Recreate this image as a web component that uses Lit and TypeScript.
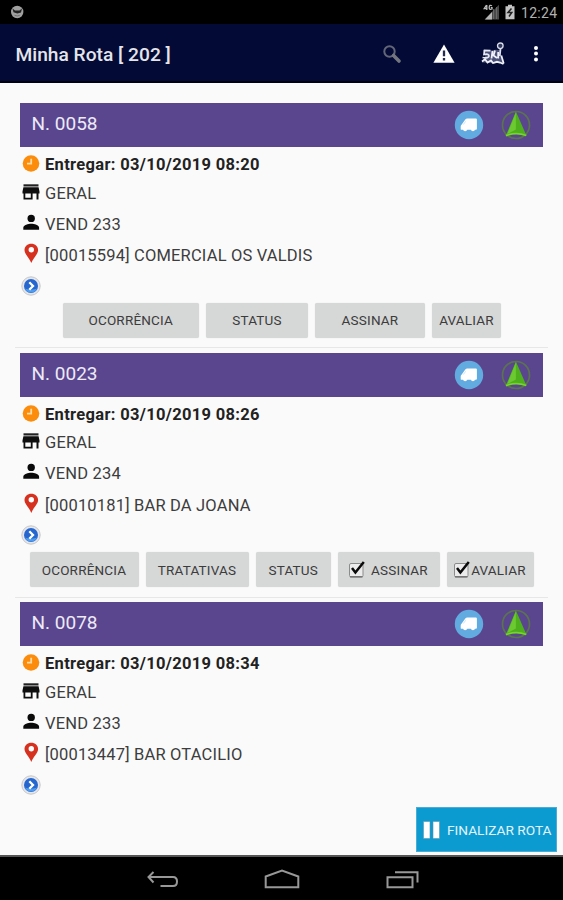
import { LitElement, html, css, svg, nothing } from "lit";
import { customElement, property } from "lit/decorators.js";
import { styleMap } from "lit/directives/style-map.js";

interface Action {
  label: string;
  width: number;
  checked?: boolean;
  gap?: number;
}

interface Delivery {
  number: string;
  due: string;
  seller: string;
  customer: string;
  indent: number;
  actions: Action[];
}

const deliveries: Delivery[] = [
  {
    number: "0058",
    due: "03/10/2019 08:20",
    seller: "VEND 233",
    customer: "[00015594] COMERCIAL OS VALDIS",
    indent: 42.5,
    actions: [
      { label: "OCORRÊNCIA", width: 136.5 },
      { label: "STATUS", width: 102 },
      { label: "ASSINAR", width: 110 },
      { label: "AVALIAR", width: 69 },
    ],
  },
  {
    number: "0023",
    due: "03/10/2019 08:26",
    seller: "VEND 234",
    customer: "[00010181] BAR DA JOANA",
    indent: 9.5,
    actions: [
      { label: "OCORRÊNCIA", width: 109 },
      { label: "TRATATIVAS", width: 103 },
      { label: "STATUS", width: 75.5 },
      { label: "ASSINAR", width: 102, checked: true, gap: 5 },
      { label: "AVALIAR", width: 87, checked: true, gap: 0 },
    ],
  },
  {
    number: "0078",
    due: "03/10/2019 08:34",
    seller: "VEND 233",
    customer: "[00013447] BAR OTACILIO",
    indent: 0,
    actions: [],
  },
];

const clockIcon = html`<svg width="18" height="18" viewBox="0 0 18 18">
  <circle cx="9" cy="9.500" r="8.300" fill="#fb8c0c" />
  <path d="M9.200 4.700V9.700H5" fill="none" stroke="#ffdca6" stroke-width="1.800" />
</svg>`;

const storeIcon = html`<svg width="18" height="18" viewBox="0 0 18 18">
  <path d="M1.500 1.300h15v2.200h-15z" fill="#222" />
  <path d="M1.400 4.300h15.200l.9 4.200v1.900h-1V16.500h-2v-6.100h-3.900v6.100H1.500v-6.100H.5V8.500zM3.300 10.400v4.300h5.500v-4.300z" fill="#0e0e0e" fill-rule="evenodd" />
</svg>`;

const personIcon = html`<svg width="18" height="18" viewBox="0 0 18 18">
  <circle cx="9.200" cy="4.400" r="3.700" fill="#0a0a0a" />
  <path d="M1.300 15.700v-2c0-2.700 5-3.900 7.900-3.900s7.900 1.200 7.900 3.900v2z" fill="#0a0a0a" />
</svg>`;

const pinIcon = html`<svg width="18" height="22" viewBox="0 0 18 22">
  <path d="M9.300.8C5.500.8 2.500 3.500 2.500 7.100c0 4.200 4.800 7.500 6.800 12.900 2-5.400 6.800-8.700 6.800-12.900C16.100 3.500 13.100.8 9.300.8z" fill="#d6301f" />
  <circle cx="9.300" cy="6.800" r="2.700" fill="#fff" />
</svg>`;

const goIcon = html`<svg width="22" height="22" viewBox="0 0 22 22">
  <circle cx="11" cy="11" r="9.200" fill="#e6e6e8" stroke="#c6c8cc" stroke-width="1" />
  <circle cx="11" cy="11" r="7" fill="#2566cf" />
  <path d="M5 13.500a6.500 6.500 0 0 0 12 0c-3 1.500-9 1.500-12 0z" fill="#4c9cf2" />
  <path d="M9.300 7.300 13 11l-3.700 3.700" fill="none" stroke="#fff" stroke-width="2.300" />
</svg>`;

const vanIcon = html`<svg width="30" height="30" viewBox="0 0 30 30">
  <circle cx="15" cy="15" r="14.200" fill="#62abe0" />
  <path d="M13.300 8.500h8.600q1 0 1 1v9.300q0 1-1 1h-.8a2.300 2.300 0 0 1-4.300 0h-3.500a2.300 2.300 0 0 1-4.300 0H7.600q-.9 0-.9-.9v-2.400q0-1 .8-1.700l3.800-5.300q.8-1 2-1z" fill="#fff" />
  <path d="M11.700 11.300 9.400 14.500" stroke="#cfe5f6" stroke-width="1" />
</svg>`;

const compassIcon = html`<svg width="32" height="32" viewBox="0 0 32 32">
  <circle cx="16" cy="16" r="13.500" fill="none" stroke="#5c7350" stroke-width="1.700" />
  <path d="M15.900 2.600 26.300 26.300Q16 23.300 5.900 26.500z" fill="#4fb01e" />
  <path d="M15.900 3.500V20.500L7.300 25z" fill="#6cc930" />
  <path d="M5.900 26.700Q16 22.500 26.300 26.500" fill="none" stroke="#74d628" stroke-width="1.800" />
</svg>`;

const checkIcon = html`<svg class="check" width="18" height="18" viewBox="0 0 18 18">
  <rect x="1.500" y="2.500" width="13.500" height="13.500" rx="1.500" fill="#ececec" stroke="#8b8b8b" />
  <path d="M2 15.800h12.500" stroke="#666" stroke-width="1.200" />
  <path d="M4 7 7.400 11.500 15.800 1" fill="none" stroke="#0a0a0a" stroke-width="2.500" />
</svg>`;

@customElement("status-bar")
class StatusBar extends LitElement {
  static styles = css`
    :host {
      display: flex;
      align-items: center;
      height: 24px;
      box-sizing: border-box;
      padding: 0 5px 0 10px;
      background: #000;
      color: #b2b2b2;
      font: 14px Roboto, sans-serif;
    }
    svg { display: block; flex: none; }
    .spacer { flex: 1; }
    .battery { margin-left: 5px; }
    .time { margin: 2px 0 0 6px; width: 37px; letter-spacing: 0.3px; white-space: nowrap; }
  `;
  render() {
    return html`
      <svg width="14" height="14" viewBox="0 0 14 14">
        <circle cx="7.200" cy="7" r="6.200" fill="#a0a0a0" />
        <path d="M2.500 3.500 5 5.400h4.500L12 3.500 11 7.500 7.300 8.500 3.500 7.300z" fill="#222" />
        <path d="M4.500 10.300q2.800 1.300 5.300 0" fill="none" stroke="#666" stroke-width=".8" />
      </svg>
      <span class="spacer"></span>
      <svg width="17" height="16" viewBox="0 0 17 16">
        <path d="M16 .8V15.500H1.500z" fill="#494949" />
        <path d="M9 8v7.500H2z" fill="#b5b5b5" />
        <path d="M3.500 1 1.200 4.500h3.300M3.800 1v5M9 1.800Q6.300.3 6.200 3.300T9 5V3.600H7.800" fill="none" stroke="#bdbdbd" stroke-width="1.300" />
        <path d="M10.500 5v10M13.500 3v12" stroke="#777" stroke-width=".7" />
      </svg>
      <svg class="battery" width="10" height="16" viewBox="0 0 10 16">
        <path d="M3 .8h4v1.400h2.500V15.200H.5V2.200H3z" fill="#c4c4c4" />
        <path d="M6.500 4.500 3 8.500h3.800L4 12.500" fill="none" stroke="#222" stroke-width="1.500" />
      </svg>
      <span class="time">12:24</span>
    `;
  }
}

@customElement("app-bar")
class AppBar extends LitElement {
  static styles = css`
    :host {
      display: flex;
      align-items: center;
      height: 59px;
      box-sizing: border-box;
      padding: 0 18px 0 15.5px;
      background: #020a35;
      border-bottom: 2px solid #00030f;
      color: #e4e4ea;
    }
    .title { flex: 1; margin-top: 3px; font: 500 19.200px Roboto, sans-serif; white-space: nowrap; }
    .tools { display: flex; align-items: center; margin-top: 2px; }
    svg { display: block; }
    .alert { margin-left: 31px; }
    .map { margin-left: 26px; }
    .more { margin-left: 26px; }
  `;
  render() {
    return html`
      <span class="title">Minha Rota [ 202 ]</span>
      <div class="tools">
        <svg width="20" height="20" viewBox="0 0 20 20">
          <circle cx="7.500" cy="7.500" r="5.200" fill="none" stroke="#626677" stroke-width="2" />
          <path d="m11.500 11.500 5.500 5.500" stroke="#74767f" stroke-width="3.600" stroke-linecap="round" />
        </svg>
        <svg class="alert" width="22" height="20" viewBox="0 0 22 20">
          <path d="M11 .5 21.600 18.800H.4z" fill="#fff" />
          <path d="M11 6.500v5.800M11 14v2.500" stroke="#252b4d" stroke-width="2.300" />
        </svg>
        <svg class="map" width="24" height="24" viewBox="0 0 24 24">
          <path d="M2 8 9.500 8.500 14.500 7.800 18.500 8 19.500 13 23 22 17 20.500 12 21.500 6 20.500 1 20.500 4 14.500z" fill="#4a5077" />
          <path d="M9.500 8.700 3.500 8.500 3 12.500Q8 11.500 8 14T1.500 15.500" fill="none" stroke="#e6e9f5" stroke-width="1.700" />
          <path d="M1 19.500 4 17.300 6.500 20.500 10 18.500 12 21 16 19.800 19 20.500 22.500 22" fill="none" stroke="#f1f3fb" stroke-width="1.800" />
          <path d="M11.500 9 10.500 16.500M14 8.500 12.500 13.500 16 16M17.200 10v6.500M20.300 13.500l2.400 8" fill="none" stroke="#f1f3fb" stroke-width="1.800" />
          <path d="M19.500 6.500 18.800 14" stroke="#dde0ee" stroke-width="1.800" />
          <circle cx="19.300" cy="3.800" r="2.800" fill="#30375c" stroke="#d8dbe8" stroke-width="1.300" />
        </svg>
        <svg class="more" width="14" height="20" viewBox="0 0 14 20">
          ${[3.9, 9.6, 15.4].map((y) => svg`<circle cx="5" cy=${y} r="2" fill="#fff" />`)}
        </svg>
      </div>
    `;
  }
}

@customElement("delivery-card")
class DeliveryCard extends LitElement {
  @property({ attribute: false }) delivery!: Delivery;

  static styles = css`
    :host { display: block; height: 249.500px; color: #3d3d3d; font: 16.500px Roboto, sans-serif; letter-spacing: 0.18px; }
    svg { display: block; flex: none; }
    .head {
      display: flex;
      align-items: center;
      height: 44px;
      margin: 0 20px;
      padding: 0 11px 0 11.5px;
      box-sizing: border-box;
      background: #59468e;
      color: #eeeaf6;
      font-size: 19px;
      letter-spacing: 0;
    }
    .number { flex: 1; margin-top: -3px; }
    .compass { margin-left: 16px; }
    .rows { padding: 3.500px 0 0 22px; }
    .row { display: flex; align-items: center; gap: 5px; white-space: nowrap; }
    .due { height: 28px; color: #222; font-weight: 700; letter-spacing: 0.32px; }
    .kind { height: 29px; }
    .seller { height: 33px; }
    .customer { height: 30px; }
    .go { height: 30px; margin-left: -2px; }
    .ico { width: 18px; height: 22px; display: grid; place-items: center; margin-top: -3px; }
    .actions { display: flex; gap: 7px; margin-top: 2px; }
    .action {
      display: flex;
      align-items: center;
      justify-content: center;
      height: 35px;
      box-sizing: border-box;
      border-radius: 2px;
      background: #d6d7d7;
      box-shadow: 0 0 1px #d6d7d7;
      color: #3c3c3c;
      font-size: 13.500px;
      letter-spacing: 0.2px;
      white-space: nowrap;
    }
    .check { margin-left: -2px; }
    .line { height: 1px; margin: 9.500px 15px 0; background: #e7e7e7; }
  `;

  render() {
    const d = this.delivery;
    return html`
      <div class="head">
        <span class="number">N. ${d.number}</span>
        ${vanIcon}
        <span class="compass">${compassIcon}</span>
      </div>
      <div class="rows">
        <div class="row due"><span class="ico">${clockIcon}</span><span>Entregar: ${d.due}</span></div>
        <div class="row kind"><span class="ico">${storeIcon}</span><span>GERAL</span></div>
        <div class="row seller"><span class="ico">${personIcon}</span><span>${d.seller}</span></div>
        <div class="row customer"><span class="ico">${pinIcon}</span><span>${d.customer}</span></div>
        <div class="row go">${goIcon}</div>
      </div>
      ${d.actions.length
        ? html`<div class="actions" style=${styleMap({ paddingLeft: `${d.indent + 20}px` })}>
              ${d.actions.map(
                (a) => html`<div class="action" style=${styleMap({ width: `${a.width}px`, gap: `${a.gap ?? 0}px` })}>
                  ${a.checked ? checkIcon : nothing}<span>${a.label}</span>
                </div>`
              )}
            </div>
            <div class="line"></div>`
        : nothing}
    `;
  }
}

@customElement("nav-bar")
class NavBar extends LitElement {
  static styles = css`
    :host {
      display: flex;
      justify-content: center;
      align-items: center;
      gap: 84px;
      height: 45px;
      box-sizing: border-box;
      border-top: 2px solid #555;
      padding-top: 1px;
      background: #000;
    }
    svg { display: block; fill: none; stroke: #989898; stroke-width: 2; }
  `;
  render() {
    return html`
      <svg width="36" height="24" viewBox="0 0 36 24">
        <path d="M9.500 5 4.500 10l5 5.500M4.500 10H29q4 0 4 4.500t-4 4.500H16.500" />
      </svg>
      <svg width="36" height="24" viewBox="0 0 36 24">
        <path d="M1.700 20.200V9.500L18 3.500l16.300 6v10.700z" />
      </svg>
      <svg width="36" height="24" viewBox="0 0 36 24">
        <path d="M3.500 10.200h25v10h-25zM11 5.200h22.500V15.500" />
      </svg>
    `;
  }
}

@customElement("app-root")
class AppRoot extends LitElement {
  static styles = css`
    :host {
      display: flex;
      flex-direction: column;
      position: relative;
      height: 900px;
      overflow: hidden;
      background: #fafafa;
      font-family: Roboto, sans-serif;
    }
    status-bar, app-bar, nav-bar { flex: none; }
    .list { flex: 1; min-height: 0; overflow: hidden; padding-top: 20px; }
    .finish {
      position: absolute;
      right: 6px;
      bottom: 48px;
      display: flex;
      align-items: center;
      gap: 7px;
      width: 141px;
      height: 45px;
      box-sizing: border-box;
      padding-left: 6px;
      background: #0b9bd0;
      border: 1px solid #4aacd6;
      color: #e2f4fb;
      font-size: 13.700px;
      white-space: nowrap;
    }
  `;
  render() {
    return html`
      <status-bar></status-bar>
      <app-bar></app-bar>
      <main class="list">
        ${deliveries.map((d) => html`<delivery-card .delivery=${d}></delivery-card>`)}
      </main>
      <div class="finish">
        <svg width="17" height="18" viewBox="0 0 17 18">
          <path d="M.5.500h6.500v17H.500zM10 .500h6.500v17H10z" fill="#fff" stroke="#5f95a9" stroke-width=".6" />
        </svg>
        <span>FINALIZAR ROTA</span>
      </div>
      <nav-bar></nav-bar>
    `;
  }
}
